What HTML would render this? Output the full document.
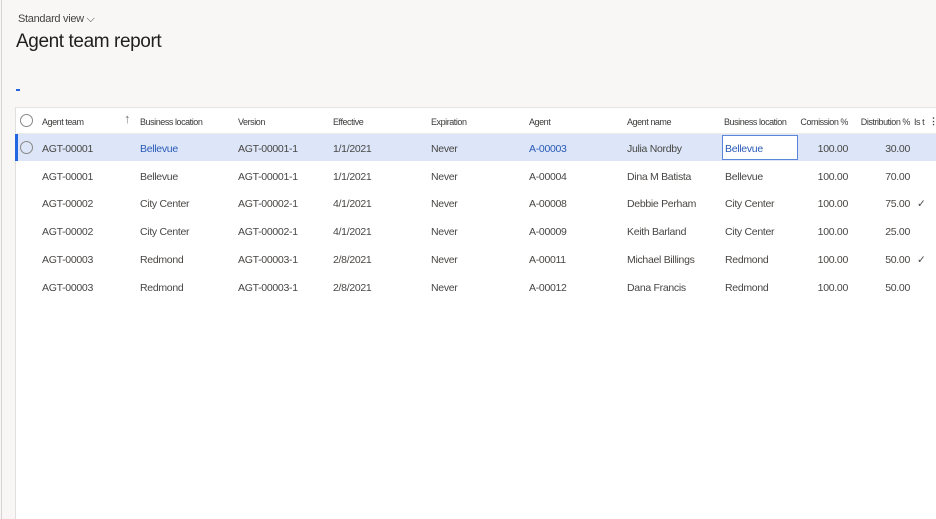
<!DOCTYPE html>
<html><head><style>
*{margin:0;padding:0;box-sizing:border-box}
body{width:936px;height:519px;overflow:hidden;background:#f8f7f6;font-family:"Liberation Sans",sans-serif;color:#484644;position:relative}
.vl{position:absolute;left:1px;top:0;width:1px;height:519px;background:#d6d4d2}
.sv{position:absolute;left:18px;top:13px;font-size:11px;color:#444;letter-spacing:-0.3px}
h1{position:absolute;left:16px;top:31px;font-size:19px;font-weight:normal;color:#201f1e;letter-spacing:-0.4px}
.dash{position:absolute;left:16px;top:89px;width:4px;height:1.5px;background:#2266e3}
.tbl{position:absolute;left:15px;top:107px;width:921px;height:412px;background:#fff;border-left:1px solid #e1dfdd;border-top:1px solid #e8e6e4}
.t{position:absolute;font-size:10.5px;white-space:nowrap;letter-spacing:-0.3px;line-height:12px}
.h{font-size:9px;color:#3b3a39;letter-spacing:-0.45px}
.row{position:absolute;left:15px;width:921px;height:27px}
.sel{background:#dce6f8;border-left:3px solid #2266e3}
.hd{position:absolute;left:15px;top:107px;width:921px;height:27px;border-bottom:1px solid #edebe9}
.c{position:absolute;width:13px;height:13px;border:1px solid #8a8886;border-radius:50%}
.b{color:#2a5ab7}
.r{text-align:right}
</style></head><body>
<div class="vl"></div>
<div class="sv">Standard view ⌵</div>
<h1>Agent team report</h1>
<div class="dash"></div>
<div class="tbl"></div>
<div class="hd"></div>
<div class="row sel" style="top:134px"></div>
<div class="c" style="left:20px;top:114px"></div>
<div class="c" style="left:20px;top:141px"></div>
<div class="t h" style="left:42px;top:116px">Agent team</div>
<div class="t h" style="left:124px;top:113px;font-size:13px;color:#777">↑</div>
<div class="t h" style="left:140px;top:116px">Business location</div>
<div class="t h" style="left:238px;top:116px">Version</div>
<div class="t h" style="left:333px;top:116px">Effective</div>
<div class="t h" style="left:431px;top:116px">Expiration</div>
<div class="t h" style="left:529px;top:116px">Agent</div>
<div class="t h" style="left:627px;top:116px">Agent name</div>
<div class="t h" style="left:724px;top:116px">Business location</div>
<div class="t h r" style="left:790px;width:58px;top:116px">Comission %</div>
<div class="t h r" style="left:850px;width:60px;top:116px">Distribution %</div>
<div class="t h" style="left:914px;top:116px">Is t</div>
<div class="t h" style="left:929px;top:115px;font-weight:bold">⋮</div>
<div style="position:absolute;left:722px;top:135px;width:76px;height:25px;border:1px solid #5b87d9;background:#fff"></div>

<div class="t" style="left:42px;top:143px">AGT-00001</div><div class="t b" style="left:140px;top:143px">Bellevue</div><div class="t" style="left:238px;top:143px">AGT-00001-1</div><div class="t" style="left:333px;top:143px">1/1/2021</div><div class="t" style="left:431px;top:143px">Never</div><div class="t b" style="left:529px;top:143px">A-00003</div><div class="t" style="left:627px;top:143px">Julia Nordby</div><div class="t b" style="left:725px;top:143px">Bellevue</div><div class="t r" style="left:790px;width:58px;top:143px">100.00</div><div class="t r" style="left:850px;width:60px;top:143px">30.00</div>

<div class="t" style="left:42px;top:171px">AGT-00001</div><div class="t" style="left:140px;top:171px">Bellevue</div><div class="t" style="left:238px;top:171px">AGT-00001-1</div><div class="t" style="left:333px;top:171px">1/1/2021</div><div class="t" style="left:431px;top:171px">Never</div><div class="t" style="left:529px;top:171px">A-00004</div><div class="t" style="left:627px;top:171px">Dina M Batista</div><div class="t" style="left:725px;top:171px">Bellevue</div><div class="t r" style="left:790px;width:58px;top:171px">100.00</div><div class="t r" style="left:850px;width:60px;top:171px">70.00</div>

<div class="t" style="left:42px;top:198px">AGT-00002</div><div class="t" style="left:140px;top:198px">City Center</div><div class="t" style="left:238px;top:198px">AGT-00002-1</div><div class="t" style="left:333px;top:198px">4/1/2021</div><div class="t" style="left:431px;top:198px">Never</div><div class="t" style="left:529px;top:198px">A-00008</div><div class="t" style="left:627px;top:198px">Debbie Perham</div><div class="t" style="left:725px;top:198px">City Center</div><div class="t r" style="left:790px;width:58px;top:198px">100.00</div><div class="t r" style="left:850px;width:60px;top:198px">75.00</div><div class="t" style="left:917px;top:198px">✓</div>

<div class="t" style="left:42px;top:226px">AGT-00002</div><div class="t" style="left:140px;top:226px">City Center</div><div class="t" style="left:238px;top:226px">AGT-00002-1</div><div class="t" style="left:333px;top:226px">4/1/2021</div><div class="t" style="left:431px;top:226px">Never</div><div class="t" style="left:529px;top:226px">A-00009</div><div class="t" style="left:627px;top:226px">Keith Barland</div><div class="t" style="left:725px;top:226px">City Center</div><div class="t r" style="left:790px;width:58px;top:226px">100.00</div><div class="t r" style="left:850px;width:60px;top:226px">25.00</div>

<div class="t" style="left:42px;top:254px">AGT-00003</div><div class="t" style="left:140px;top:254px">Redmond</div><div class="t" style="left:238px;top:254px">AGT-00003-1</div><div class="t" style="left:333px;top:254px">2/8/2021</div><div class="t" style="left:431px;top:254px">Never</div><div class="t" style="left:529px;top:254px">A-00011</div><div class="t" style="left:627px;top:254px">Michael Billings</div><div class="t" style="left:725px;top:254px">Redmond</div><div class="t r" style="left:790px;width:58px;top:254px">100.00</div><div class="t r" style="left:850px;width:60px;top:254px">50.00</div><div class="t" style="left:917px;top:254px">✓</div>

<div class="t" style="left:42px;top:282px">AGT-00003</div><div class="t" style="left:140px;top:282px">Redmond</div><div class="t" style="left:238px;top:282px">AGT-00003-1</div><div class="t" style="left:333px;top:282px">2/8/2021</div><div class="t" style="left:431px;top:282px">Never</div><div class="t" style="left:529px;top:282px">A-00012</div><div class="t" style="left:627px;top:282px">Dana Francis</div><div class="t" style="left:725px;top:282px">Redmond</div><div class="t r" style="left:790px;width:58px;top:282px">100.00</div><div class="t r" style="left:850px;width:60px;top:282px">50.00</div>
</body></html>
